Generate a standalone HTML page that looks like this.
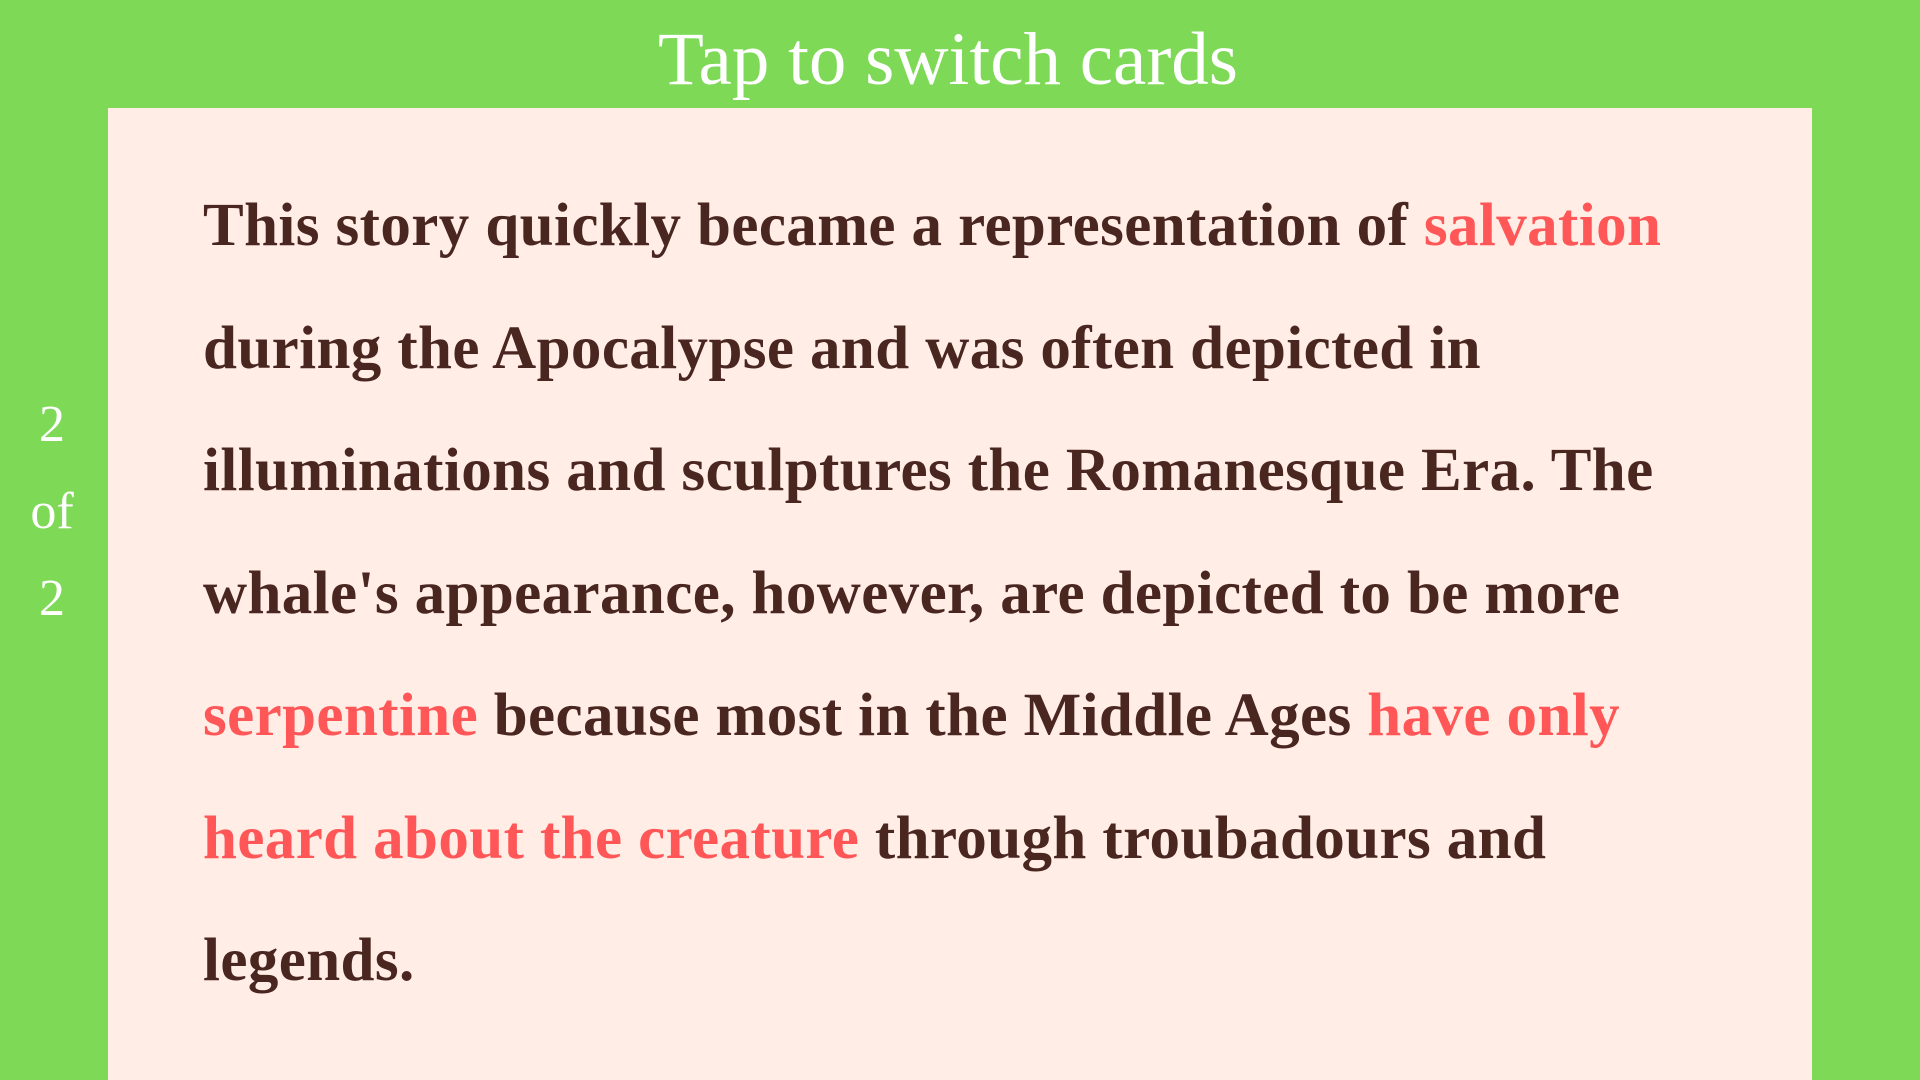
<!DOCTYPE html>
<html><head><meta charset="utf-8"><style>
html,body{margin:0;padding:0;width:1920px;height:1080px;overflow:hidden;background:#7ed957;font-family:"Liberation Serif",serif;}
.title{position:absolute;left:0;width:1896px;top:20px;text-align:center;color:#fff;font-size:75px;line-height:80px;}
.card{position:absolute;left:108px;top:108px;width:1704px;height:972px;background:#ffede6;}
.txt{position:absolute;left:203px;top:165px;width:1640px;color:#4a2620;font-weight:bold;font-size:61px;line-height:122.5px;white-space:nowrap;letter-spacing:0.4px;}
.r{color:#ff5757;}
.pg{position:absolute;left:0;width:104px;text-align:center;color:#fff;font-size:52px;top:381px;line-height:87px;}
</style></head><body>
<div class="title">Tap to switch cards</div>
<div class="card"></div>
<div class="pg">2<br>of<br>2</div>
<div class="txt">This story quickly became a representation of <span class="r">salvation</span><br>during the Apocalypse and was often depicted in<br>illuminations and sculptures the Romanesque Era. The<br>whale's appearance, however, are depicted to be more<br><span class="r">serpentine</span> because most in the Middle Ages <span class="r">have only</span><br><span class="r">heard about the creature</span> through troubadours and<br>legends.</div>
</body></html>
